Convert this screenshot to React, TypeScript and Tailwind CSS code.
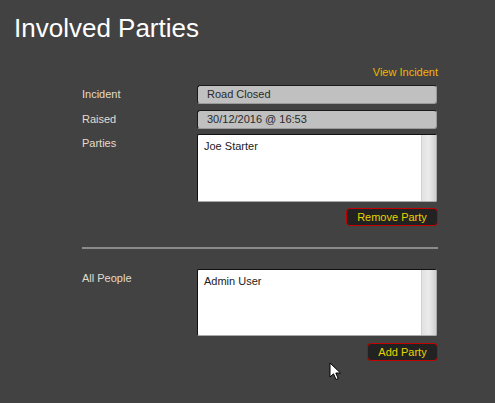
const labelCls = "w-[115px] shrink-0 text-[11px] leading-[13px] text-[#e4dccb]";

function Field({ label, value }: { label: string; value: string }) {
  return (
    <div className="flex items-center h-[19px]">
      <div className={labelCls}>{label}</div>
      <div className="w-[240px] h-[19px] rounded-[3px] border border-[#1a1a1a] border-r-[#9a9a9a] border-b-[#9a9a9a] bg-[#c0c0c0] pl-[9px] text-[11px] leading-[17px] text-[#2a2a2a]">
        {value}
      </div>
    </div>
  );
}

function ListBox({ items, height }: { items: string[]; height: string }) {
  return (
    <div className={`flex w-[240px] ${height} border border-[#111] border-r-[#aaa] border-b-[#aaa] rounded-[2px] bg-white`}>
      <div className="flex-1 pl-[6px] pt-[5px] text-[11px] leading-[13px] text-[#222]">
        {items.map((it) => (
          <div key={it}>{it}</div>
        ))}
      </div>
      <div className="w-[15px] bg-gradient-to-r from-[#e2e2e2] via-[#ebebeb] to-[#cfcfcf] border-l border-[#d0d0d0]" />
    </div>
  );
}

function Button({ children, width }: { children: string; width: string }) {
  return (
    <button className={`${width} h-[18px] rounded-[4px] border border-[#c40000] bg-[#222222] text-[11px] leading-[14px] text-[#e8d200]`}>
      {children}
    </button>
  );
}

export default function App() {
  return (
    <div
      className="relative w-[495px] h-[403px] overflow-hidden bg-[#424242]"
      style={{ fontFamily: '"Liberation Sans", Arial, sans-serif' }}
    >
      <h1 className="pl-[14px] pt-[13px] text-[26px] leading-[30px] text-white font-normal">Involved Parties</h1>

      <div className="ml-[82px] w-[356px] mt-[23px]">
        <div className="flex justify-end text-[11px] leading-[13px] text-[#f2b400]">View Incident</div>

        <div className="mt-[6px] flex flex-col gap-[6px]">
          <Field label="Incident" value="Road Closed" />
          <Field label="Raised" value="30/12/2016 @ 16:53" />
        </div>

        <div className="mt-[5px] flex">
          <div className={`${labelCls} pt-[3px]`}>Parties</div>
          <ListBox items={["Joe Starter"]} height="h-[68px]" />
        </div>
        <div className="mt-[6px] flex justify-end">
          <Button width="w-[92px]">Remove Party</Button>
        </div>

        <div className="mt-[21px] h-[2px] bg-[#8a8a8a]" />

        <div className="mt-[20px] flex">
          <div className={`${labelCls} pt-[3px]`}>All People</div>
          <ListBox items={["Admin User"]} height="h-[67px]" />
        </div>
        <div className="mt-[7px] flex justify-end">
          <Button width="w-[71px]">Add Party</Button>
        </div>
      </div>

      <svg className="absolute left-[329px] top-[362px]" width="14" height="20" viewBox="0 0 14 20">
        <path d="M1 1 L1 15 L4.5 11.8 L7 17.5 L9.2 16.5 L6.8 11 L11.5 11 Z" fill="#fff" stroke="#000" strokeWidth="1" strokeLinejoin="round" />
      </svg>
    </div>
  );
}
